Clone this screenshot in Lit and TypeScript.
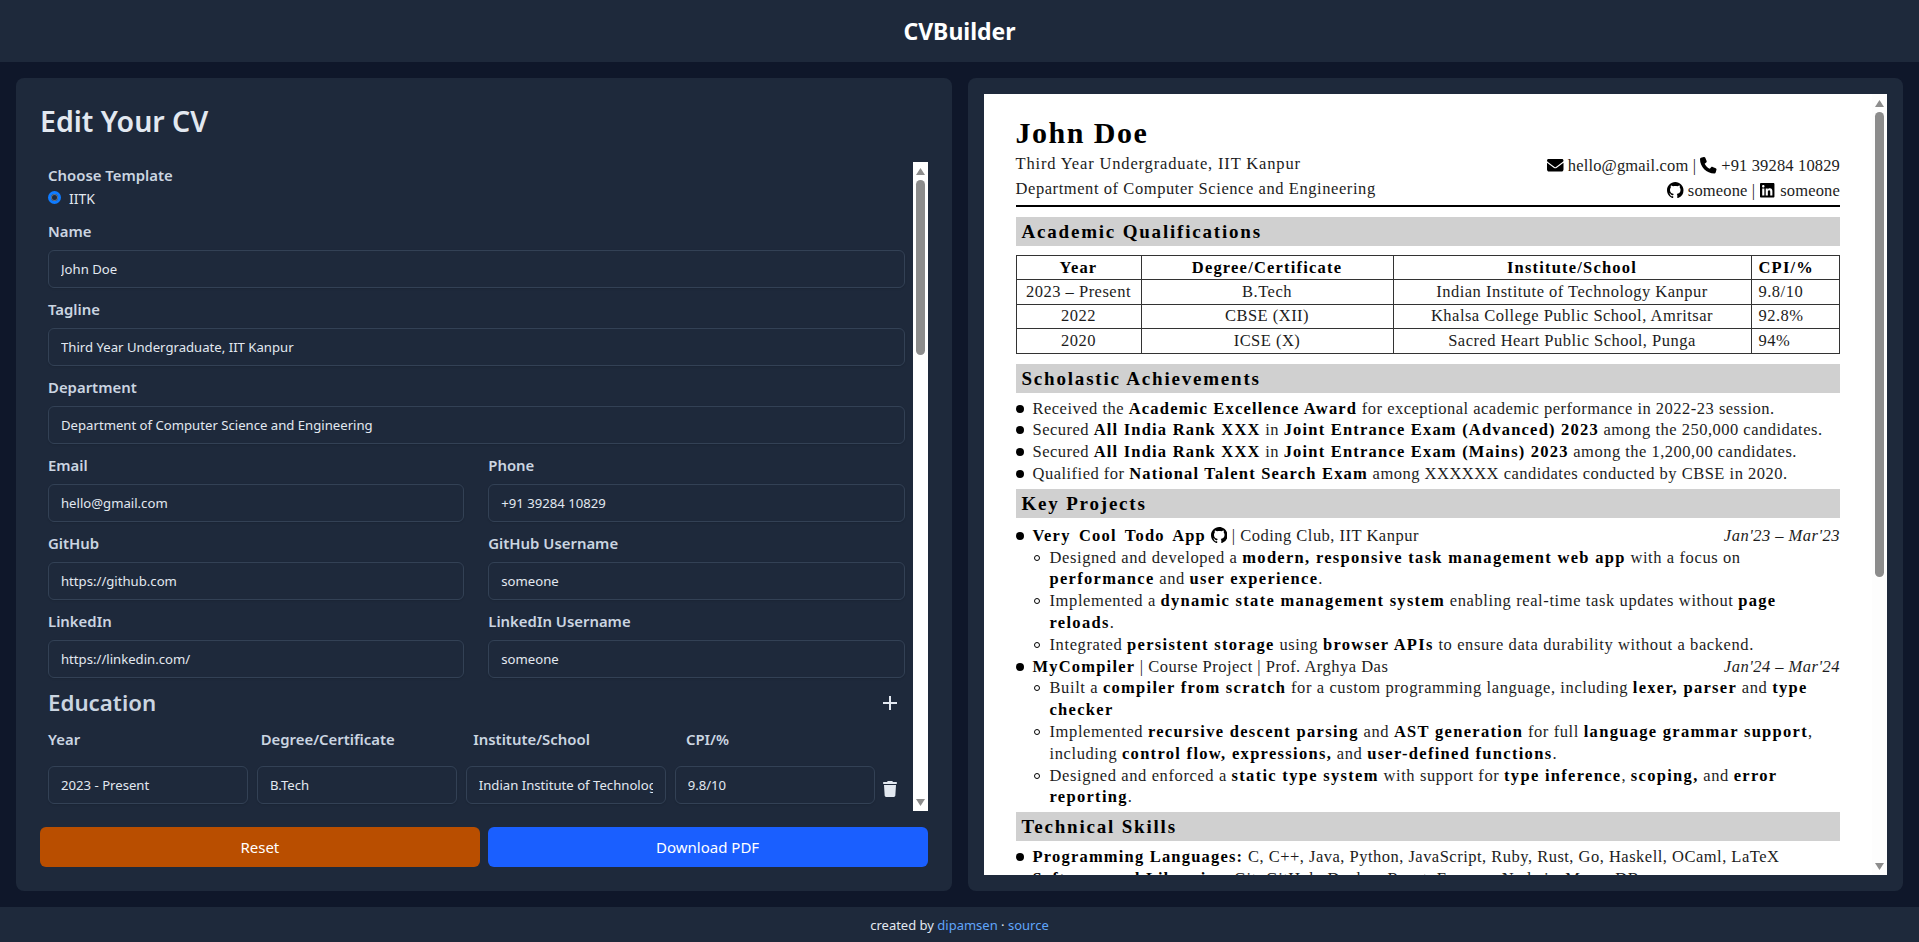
import { LitElement, html, css, svg } from 'lit';
import { customElement, property } from 'lit/decorators.js';

const icons = {
  envelope: svg`<path d="M48 64C21.5 64 0 85.5 0 112c0 15.1 7.1 29.3 19.2 38.4L236.8 313.6c11.4 8.5 27 8.5 38.4 0L492.8 150.4c12.1-9.1 19.2-23.3 19.2-38.4c0-26.5-21.5-48-48-48H48zM0 176V384c0 35.3 28.7 64 64 64H448c35.3 0 64-28.7 64-64V176L294.4 339.2c-22.8 17.1-54 17.1-76.8 0L0 176z"/>`,
  phone: svg`<path d="M164.9 24.6c-7.7-18.6-28-28.5-47.4-23.2l-88 24C12.1 30.2 0 46 0 64C0 311.4 200.6 512 448 512c18 0 33.8-12.1 38.6-29.5l24-88c5.3-19.4-4.6-39.7-23.2-47.4l-96-40c-16.3-6.8-35.2-2.1-46.3 11.6L304.7 368C234.3 334.7 177.3 277.7 144 207.3L193.3 167c13.7-11.2 18.4-30 11.6-46.3l-40-96z"/>`,
  github: svg`<path transform="scale(32)" d="M8 0C3.58 0 0 3.58 0 8c0 3.54 2.29 6.53 5.47 7.59.4.07.55-.17.55-.38 0-.19-.01-.82-.01-1.49-2.01.37-2.53-.49-2.69-.94-.09-.23-.48-.94-.82-1.13-.28-.15-.68-.52-.01-.53.63-.01 1.08.58 1.23.82.72 1.21 1.87.87 2.33.66.07-.52.28-.87.51-1.07-1.78-.2-3.64-.89-3.64-3.95 0-.87.31-1.59.82-2.15-.08-.2-.36-1.02.08-2.12 0 0 .67-.21 2.2.82.64-.18 1.32-.27 2-.27.68 0 1.36.09 2 .27 1.53-1.04 2.2-.82 2.2-.82.44 1.1.16 1.92.08 2.12.51.56.82 1.27.82 2.15 0 3.07-1.87 3.75-3.65 3.95.29.25.54.73.54 1.48 0 1.07-.01 1.93-.01 2.2 0 .21.15.46.55.38A8.013 8.013 0 0016 8c0-4.42-3.58-8-8-8z"/>`,
  linkedin: svg`<path d="M416 32H31.9C14.3 32 0 46.5 0 64.3v383.4C0 465.5 14.3 480 31.9 480H416c17.6 0 32-14.5 32-32.3V64.3c0-17.8-14.4-32.3-32-32.3zM135.4 416H69V202.2h66.5V416zm-33.2-243c-21.3 0-38.5-17.3-38.5-38.5S80.9 96 102.2 96c21.2 0 38.5 17.3 38.5 38.5 0 21.3-17.2 38.5-38.5 38.5zm282.1 243h-66.4V312c0-24.8-.5-56.7-34.5-56.7-34.6 0-39.9 27-39.9 54.9V416h-66.4V202.2h63.7v29.2h.9c8.9-16.8 30.6-34.5 62.9-34.5 67.2 0 79.7 44.3 79.7 101.9V416z"/>`,
  trash: svg`<path d="M135.2 17.7L128 32H32C14.3 32 0 46.3 0 64S14.3 96 32 96H416c17.7 0 32-14.3 32-32s-14.3-32-32-32H320l-7.2-14.3C307.4 6.8 296.3 0 284.2 0H163.8c-12.1 0-23.2 6.8-28.6 17.7zM416 128H32L53.2 467c1.6 25.3 22.6 45 47.9 45H346.9c25.3 0 46.3-19.7 47.9-45L416 128z"/>`,
};

const icon = (name: keyof typeof icons, cls = 'ico') =>
  html`<svg class=${cls} viewBox="0 0 512 512" fill="currentColor">${icons[name]}</svg>`;

// Windows style scrollbar, drawn because the headless browser hides the native one
@customElement('fake-scrollbar')
export class FakeScrollbar extends LitElement {
  static styles = css`
    :host {
      display: flex;
      flex-direction: column;
      align-items: center;
      flex: none;
      width: 15px;
      background: var(--track, #fff);
    }
    .arrow {
      flex: none;
      height: 18px;
      display: flex;
      align-items: center;
      justify-content: center;
    }
    .arrow svg {
      width: 9px;
      height: 7px;
      fill: #8c8c8c;
    }
    .lane {
      flex: 1;
      width: 100%;
      display: flex;
      justify-content: center;
    }
    .thumb {
      width: 9px;
      background: #8c8c8c;
      border-radius: 5px;
    }
  `;

  @property({ type: Number })
  thumb = 100;

  render() {
    return html`
      <div class="arrow"><svg viewBox="0 0 9 7"><path d="M4.5 0 9 7H0z" /></svg></div>
      <div class="lane"><div class="thumb" style="height:${this.thumb}px"></div></div>
      <div class="arrow"><svg viewBox="0 0 9 7"><path d="M0 0h9L4.5 7z" /></svg></div>
    `;
  }
}

@customElement('edit-panel')
export class EditPanel extends LitElement {
  static styles = css`
    :host {
      display: flex;
      flex-direction: column;
      min-height: 0;
      padding: 24px;
      background: #1e293b;
      border-radius: 8px;
      font-family: 'Noto Sans', sans-serif;
    }
    h2 {
      margin: 0 0 22px;
      font-size: 28.5px;
      line-height: 38px;
      font-weight: 600;
      color: #e2e8f0;
    }
    .box {
      display: flex;
      height: 649px;
      flex: none;
    }
    .form {
      flex: 1;
      min-width: 0;
      overflow: hidden;
      padding: 2px 8px 0;
    }
    label,
    .label {
      display: block;
      font-size: 14.9px;
      line-height: 22px;
      font-weight: 600;
      color: #cbd5e1;
    }
    .radio {
      display: flex;
      align-items: center;
      gap: 8px;
      height: 24px;
      margin-bottom: 10px;
      font-size: 14px;
      color: #e2e8f0;
    }
    .radio i {
      width: 13px;
      height: 13px;
      margin-top: -2px;
      box-sizing: border-box;
      border-radius: 50%;
      border: 3px solid #0f7bff;
      background: #1e293b;
      box-shadow: inset 0 0 0 1px rgba(255, 255, 255, 0.35);
    }
    .field {
      margin-bottom: 10px;
    }
    .field label {
      margin-bottom: 8px;
    }
    .two {
      display: grid;
      grid-template-columns: 1fr 1fr;
      gap: 0 24px;
    }
    input {
      display: block;
      width: 100%;
      height: 38px;
      box-sizing: border-box;
      padding: 0 12px;
      border: 1px solid #334155;
      border-radius: 6px;
      background: #1e293b;
      color: #e2e8f0;
      font: 13.15px 'Noto Sans', sans-serif;
      box-shadow: 0 1px 2px rgba(0, 0, 0, 0.1);
    }
    .edu-head {
      display: flex;
      align-items: center;
      justify-content: space-between;
      height: 30px;
      margin-bottom: 10px;
    }
    h3 {
      margin: 0;
      font-size: 22.3px;
      line-height: 30px;
      font-weight: 600;
      color: #cbd5e1;
    }
    .plus {
      width: 14px;
      height: 14px;
      margin-right: 8px;
      stroke: #e2e8f0;
      stroke-width: 2;
    }
    .cols {
      display: grid;
      grid-template-columns: repeat(4, 1fr);
      padding-right: 6px;
      margin-bottom: 16px;
    }
    .edu-row {
      display: flex;
      align-items: center;
      gap: 8.5px;
    }
    .trash {
      flex: none;
      width: 16px;
      height: 16px;
      margin: 8px 6px 0 -1px;
      color: #e2e8f0;
    }
    .actions {
      display: grid;
      grid-template-columns: 1fr 1fr;
      gap: 8px;
      margin-top: 16px;
    }
    button {
      height: 40px;
      border: none;
      border-radius: 6px;
      color: #fff;
      font: 15px 'Noto Sans', sans-serif;
    }
    .reset {
      background: #b94e00;
    }
    .download {
      background: #1a5fff;
    }
  `;

  private _field(name: string, value: string) {
    return html`<div class="field"><label>${name}</label><input value=${value} /></div>`;
  }

  render() {
    return html`
      <h2>Edit Your CV</h2>
      <div class="box">
        <div class="form">
          <div class="label">Choose Template</div>
          <div class="radio"><i></i>IITK</div>
          ${this._field('Name', 'John Doe')}
          ${this._field('Tagline', 'Third Year Undergraduate, IIT Kanpur')}
          ${this._field('Department', 'Department of Computer Science and Engineering')}
          <div class="two">
            ${this._field('Email', 'hello@gmail.com')}
            ${this._field('Phone', '+91 39284 10829')}
            ${this._field('GitHub', 'https://github.com')}
            ${this._field('GitHub Username', 'someone')}
            ${this._field('LinkedIn', 'https://linkedin.com/')}
            ${this._field('LinkedIn Username', 'someone')}
          </div>
          <div class="edu-head">
            <h3>Education</h3>
            <svg class="plus" viewBox="0 0 14 14"><path d="M7 0v14M0 7h14" /></svg>
          </div>
          <div class="cols">
            <div class="label">Year</div>
            <div class="label">Degree/Certificate</div>
            <div class="label">Institute/School</div>
            <div class="label">CPI/%</div>
          </div>
          <div class="edu-row">
            <input value="2023 - Present" />
            <input value="B.Tech" />
            <input value="Indian Institute of Technology Kanpur" />
            <input value="9.8/10" />
            ${icon('trash', 'trash')}
          </div>
        </div>
        <fake-scrollbar thumb="175"></fake-scrollbar>
      </div>
      <div class="actions">
        <button class="reset">Reset</button>
        <button class="download">Download PDF</button>
      </div>
    `;
  }
}

const eduRows = [
  ['2023 – Present', 'B.Tech', 'Indian Institute of Technology Kanpur', '9.8/10'],
  ['2022', 'CBSE (XII)', 'Khalsa College Public School, Amritsar', '92.8%'],
  ['2020', 'ICSE (X)', 'Sacred Heart Public School, Punga', '94%'],
];

@customElement('cv-preview')
export class CvPreview extends LitElement {
  static styles = css`
    :host {
      display: flex;
      min-height: 0;
      padding: 16px;
      background: #1e293b;
      border-radius: 8px;
    }
    .sheet {
      flex: 1;
      min-width: 0;
      height: 781px;
      overflow: hidden;
      box-sizing: border-box;
      padding: 21px 32px 0;
      background: #fff;
      color: #1c1c1c;
      font-family: 'Liberation Serif', serif;
      font-size: 16.5px;
      line-height: 21.8px;
      letter-spacing: 0.49px;
    }
    b,
    th {
      letter-spacing: 1.2px;
      color: #000;
    }
    fake-scrollbar {
      --track: #fdfdfd;
    }
    .top {
      display: flex;
      justify-content: space-between;
      align-items: flex-end;
      padding-bottom: 4px;
      border-bottom: 2px solid #000;
      margin-bottom: 10px;
    }
    h1 {
      margin: 0;
      font-size: 30px;
      line-height: 36px;
      letter-spacing: 1.5px;
      color: #000;
    }
    .tag {
      line-height: 25px;
      letter-spacing: 0.57px;
    }
    .tag:first-of-type {
      letter-spacing: 0.84px;
    }
    .contact {
      margin-bottom: -2px;
      text-align: right;
      line-height: 24.5px;
      letter-spacing: 0.15px;
    }
    .ico {
      width: 16.5px;
      height: 16.5px;
      vertical-align: -2.5px;
      color: #000;
    }
    h2 {
      margin: 0;
      height: 29px;
      padding-left: 6px;
      background: #d0d0d0;
      font-size: 19px;
      line-height: 29px;
      letter-spacing: 1.8px;
      color: #000;
    }
    table {
      width: 100%;
      margin: 9px 0 10px;
      table-layout: fixed;
      border-collapse: collapse;
      border: 1px solid #000;
    }
    th,
    td {
      height: 23.4px;
      padding: 0 7px;
      border: 1px solid #333;
      text-align: center;
      font-weight: 400;
      line-height: 20px;
      white-space: nowrap;
    }
    th {
      font-weight: 700;
    }
    th:last-child,
    td:last-child {
      text-align: left;
    }
    ul {
      list-style: none;
      margin: 0;
      padding: 0;
    }
    .list {
      margin: 5px 0 4px;
    }
    .projects {
      margin: 7px 0 4px;
    }
    li {
      display: flex;
      gap: 9px;
    }
    li::before {
      content: '';
      flex: none;
      width: 8px;
      height: 8px;
      margin-top: 7px;
      border-radius: 50%;
      background: #000;
    }
    li > span {
      flex: 1;
      min-width: 0;
      white-space: nowrap;
    }
    .sub li {
      gap: 10px;
      padding-left: 1px;
    }
    .sub li::before {
      width: 6px;
      height: 6px;
      margin-top: 8px;
      box-sizing: border-box;
      background: none;
      border: 1px solid #000;
    }
    .sub {
      letter-spacing: 0.6px;
    }
    .sub b {
      letter-spacing: 1.3px;
    }
    .row {
      display: flex;
      justify-content: space-between;
    }
    .row b {
      word-spacing: 3px;
    }
    em {
      font-style: italic;
    }
  `;

  render() {
    return html`
      <div class="sheet">
        <div class="top">
          <div>
            <h1>John Doe</h1>
            <div class="tag">Third Year Undergraduate, IIT Kanpur</div>
            <div class="tag">Department of Computer Science and Engineering</div>
          </div>
          <div class="contact">
            <div>${icon('envelope')} hello@gmail.com | ${icon('phone')} +91 39284 10829</div>
            <div>${icon('github')} someone | ${icon('linkedin')} someone</div>
          </div>
        </div>

        <h2>Academic Qualifications</h2>
        <table>
          <colgroup>
            <col style="width:125px" />
            <col style="width:252px" />
            <col style="width:358px" />
            <col />
          </colgroup>
          <tr><th>Year</th><th>Degree/Certificate</th><th>Institute/School</th><th>CPI/%</th></tr>
          ${eduRows.map(r => html`<tr>${r.map(c => html`<td>${c}</td>`)}</tr>`)}
        </table>

        <h2>Scholastic Achievements</h2>
        <ul class="list">
          <li><span>Received the <b>Academic Excellence Award</b> for exceptional academic performance in 2022-23 session.</span></li>
          <li><span>Secured <b>All India Rank XXX</b> in <b>Joint Entrance Exam (Advanced) 2023</b> among the 250,000 candidates.</span></li>
          <li><span>Secured <b>All India Rank XXX</b> in <b>Joint Entrance Exam (Mains) 2023</b> among the 1,200,00 candidates.</span></li>
          <li><span>Qualified for <b>National Talent Search Exam</b> among XXXXXX candidates conducted by CBSE in 2020.</span></li>
        </ul>

        <h2>Key Projects</h2>
        <ul class="projects">
          <li>
            <span>
              <div class="row">
                <div><b>Very Cool Todo App</b> ${icon('github')} | Coding Club, IIT Kanpur</div>
                <em>Jan'23 – Mar'23</em>
              </div>
              <ul class="sub">
                <li><span>Designed and developed a <b>modern, responsive task management web app</b> with a focus on<br /><b>performance</b> and <b>user experience</b>.</span></li>
                <li><span>Implemented a <b>dynamic state management system</b> enabling real-time task updates without <b>page</b><br /><b>reloads</b>.</span></li>
                <li><span>Integrated <b>persistent storage</b> using <b>browser APIs</b> to ensure data durability without a backend.</span></li>
              </ul>
            </span>
          </li>
          <li>
            <span>
              <div class="row">
                <div><b>MyCompiler</b> | Course Project | Prof. Arghya Das</div>
                <em>Jan'24 – Mar'24</em>
              </div>
              <ul class="sub">
                <li><span>Built a <b>compiler from scratch</b> for a custom programming language, including <b>lexer, parser</b> and <b>type</b><br /><b>checker</b></span></li>
                <li><span>Implemented <b>recursive descent parsing</b> and <b>AST generation</b> for full <b>language grammar support</b>,<br />including <b>control flow, expressions,</b> and <b>user-defined functions</b>.</span></li>
                <li><span>Designed and enforced a <b>static type system</b> with support for <b>type inference</b>, <b>scoping,</b> and <b>error</b><br /><b>reporting</b>.</span></li>
              </ul>
            </span>
          </li>
        </ul>

        <h2>Technical Skills</h2>
        <ul class="list">
          <li><span><b>Programming Languages:</b> C, C++, Java, Python, JavaScript, Ruby, Rust, Go, Haskell, OCaml, LaTeX</span></li>
          <li><span><b>Software and Libraries:</b> Git, GitHub, Docker, React, Express, Node.js, MongoDB</span></li>
        </ul>
      </div>
      <fake-scrollbar thumb="465"></fake-scrollbar>
    `;
  }
}

@customElement('app-root')
export class AppRoot extends LitElement {
  static styles = css`
    :host {
      display: flex;
      flex-direction: column;
      height: 942px;
      overflow: hidden;
      background: #0f172a;
      font-family: 'Noto Sans', sans-serif;
    }
    header {
      flex: none;
      height: 62px;
      display: flex;
      align-items: center;
      justify-content: center;
      background: #1e293b;
      color: #fff;
      font-size: 23px;
      font-weight: 700;
    }
    main {
      flex: 1;
      min-height: 0;
      display: grid;
      grid-template-columns: 1fr 1fr;
      gap: 16px;
      padding: 16px;
    }
    footer {
      flex: none;
      height: 35px;
      display: flex;
      align-items: center;
      justify-content: center;
      gap: 4px;
      background: #1e293b;
      color: #e2e8f0;
      font-size: 13px;
    }
    a {
      color: #60a5fa;
      text-decoration: none;
    }
  `;

  render() {
    return html`
      <header>CVBuilder</header>
      <main>
        <edit-panel></edit-panel>
        <cv-preview></cv-preview>
      </main>
      <footer>
        <span>created by <a href="#">dipamsen</a> · <a href="#">source</a></span>
      </footer>
    `;
  }
}
